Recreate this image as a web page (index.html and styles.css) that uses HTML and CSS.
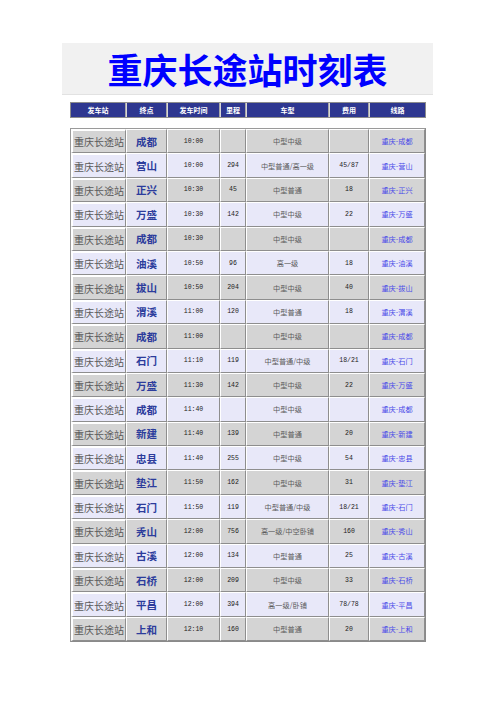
FILE: index.html
```html
<!DOCTYPE html>
<html lang="zh-CN">
<head>
<meta charset="utf-8">
<title>重庆长途站时刻表</title>
<link rel="stylesheet" href="styles.css">
</head>
<body>
<div class="page">
  <div class="title">重庆长途站时刻表</div>
  <table class="head">
    <colgroup><col class="c1"><col class="c2"><col class="c3"><col class="c4"><col class="c5"><col class="c6"><col class="c7"></colgroup>
    <tr><th>发车站</th><th>终点</th><th>发车时间</th><th>里程</th><th>车型</th><th>费用</th><th>线路</th></tr>
  </table>
  <table class="tt">
    <colgroup><col class="c1"><col class="c2"><col class="c3"><col class="c4"><col class="c5"><col class="c6"><col class="c7"></colgroup>
    <tr class="g"><td class="st">重庆长途站</td><td class="dst">成都</td><td class="num">10:00</td><td class="num"></td><td class="typ">中型中级</td><td class="num"></td><td class="rt">重庆-成都</td></tr>
    <tr class="l"><td class="st">重庆长途站</td><td class="dst">营山</td><td class="num">10:00</td><td class="num">294</td><td class="typ">中型普通/高一级</td><td class="num">45/87</td><td class="rt">重庆-营山</td></tr>
    <tr class="g"><td class="st">重庆长途站</td><td class="dst">正兴</td><td class="num">10:30</td><td class="num">45</td><td class="typ">中型普通</td><td class="num">18</td><td class="rt">重庆-正兴</td></tr>
    <tr class="l"><td class="st">重庆长途站</td><td class="dst">万盛</td><td class="num">10:30</td><td class="num">142</td><td class="typ">中型中级</td><td class="num">22</td><td class="rt">重庆-万盛</td></tr>
    <tr class="g"><td class="st">重庆长途站</td><td class="dst">成都</td><td class="num">10:30</td><td class="num"></td><td class="typ">中型中级</td><td class="num"></td><td class="rt">重庆-成都</td></tr>
    <tr class="l"><td class="st">重庆长途站</td><td class="dst">油溪</td><td class="num">10:50</td><td class="num">96</td><td class="typ">高一级</td><td class="num">18</td><td class="rt">重庆-油溪</td></tr>
    <tr class="g"><td class="st">重庆长途站</td><td class="dst">拔山</td><td class="num">10:50</td><td class="num">204</td><td class="typ">中型中级</td><td class="num">40</td><td class="rt">重庆-拔山</td></tr>
    <tr class="l"><td class="st">重庆长途站</td><td class="dst">渭溪</td><td class="num">11:00</td><td class="num">120</td><td class="typ">中型普通</td><td class="num">18</td><td class="rt">重庆-渭溪</td></tr>
    <tr class="g"><td class="st">重庆长途站</td><td class="dst">成都</td><td class="num">11:00</td><td class="num"></td><td class="typ">中型中级</td><td class="num"></td><td class="rt">重庆-成都</td></tr>
    <tr class="l"><td class="st">重庆长途站</td><td class="dst">石门</td><td class="num">11:10</td><td class="num">119</td><td class="typ">中型普通/中级</td><td class="num">18/21</td><td class="rt">重庆-石门</td></tr>
    <tr class="g"><td class="st">重庆长途站</td><td class="dst">万盛</td><td class="num">11:30</td><td class="num">142</td><td class="typ">中型中级</td><td class="num">22</td><td class="rt">重庆-万盛</td></tr>
    <tr class="l"><td class="st">重庆长途站</td><td class="dst">成都</td><td class="num">11:40</td><td class="num"></td><td class="typ">中型中级</td><td class="num"></td><td class="rt">重庆-成都</td></tr>
    <tr class="g"><td class="st">重庆长途站</td><td class="dst">新建</td><td class="num">11:40</td><td class="num">139</td><td class="typ">中型普通</td><td class="num">20</td><td class="rt">重庆-新建</td></tr>
    <tr class="l"><td class="st">重庆长途站</td><td class="dst">忠县</td><td class="num">11:40</td><td class="num">255</td><td class="typ">中型中级</td><td class="num">54</td><td class="rt">重庆-忠县</td></tr>
    <tr class="g"><td class="st">重庆长途站</td><td class="dst">垫江</td><td class="num">11:50</td><td class="num">162</td><td class="typ">中型中级</td><td class="num">31</td><td class="rt">重庆-垫江</td></tr>
    <tr class="l"><td class="st">重庆长途站</td><td class="dst">石门</td><td class="num">11:50</td><td class="num">119</td><td class="typ">中型普通/中级</td><td class="num">18/21</td><td class="rt">重庆-石门</td></tr>
    <tr class="g"><td class="st">重庆长途站</td><td class="dst">秀山</td><td class="num">12:00</td><td class="num">756</td><td class="typ">高一级/中空卧铺</td><td class="num">160</td><td class="rt">重庆-秀山</td></tr>
    <tr class="l"><td class="st">重庆长途站</td><td class="dst">古溪</td><td class="num">12:00</td><td class="num">134</td><td class="typ">中型普通</td><td class="num">25</td><td class="rt">重庆-古溪</td></tr>
    <tr class="g"><td class="st">重庆长途站</td><td class="dst">石桥</td><td class="num">12:00</td><td class="num">209</td><td class="typ">中型中级</td><td class="num">33</td><td class="rt">重庆-石桥</td></tr>
    <tr class="l"><td class="st">重庆长途站</td><td class="dst">平昌</td><td class="num">12:00</td><td class="num">394</td><td class="typ">高一级/卧铺</td><td class="num">78/78</td><td class="rt">重庆-平昌</td></tr>
    <tr class="g"><td class="st">重庆长途站</td><td class="dst">上和</td><td class="num">12:10</td><td class="num">160</td><td class="typ">中型普通</td><td class="num">20</td><td class="rt">重庆-上和</td></tr>
  </table>
</div>
</body>
</html>
```
FILE: styles.css
```css
html, body {
  margin: 0;
  padding: 0;
  background: #ffffff;
}
body {
  font-family: "Noto Sans CJK SC", "Noto Sans", sans-serif;
}
.page {
  padding: 43px 0 0 62px;
}
.title {
  width: 371px;
  height: 51px;
  background: #f1f1f1;
  border-bottom: 1px solid #e2e2e2;
  color: #0000ff;
  font-weight: bold;
  font-size: 35px;
  line-height: 51px;
  text-align: center;
}
table {
  border-collapse: separate;
  border-spacing: 0;
  table-layout: fixed;
  width: 354px;
  margin-left: 8px;
}
col.c1 { width: 55px; }
col.c2 { width: 41px; }
col.c3 { width: 53px; }
col.c4 { width: 26px; }
col.c5 { width: 83px; }
col.c6 { width: 40px; }
col.c7 { width: 56px; }

.head {
  margin-top: 7px;
  border: 1px solid #8c8c8c;
}
.head th {
  height: 14px;
  padding: 0;
  background: #2e3790;
  color: #ffffff;
  font-size: 7px;
  font-weight: bold;
  text-align: center;
  border-right: 1px solid #a8a8a8;
  border-left: 1px solid #d8d8d8;
  line-height: 14px;
}
.head th:first-child { border-left: 0; }
.head th:last-child { border-right: 0; }

.tt {
  margin-top: 10px;
  border-top: 1px solid #9a9a9a;
  border-left: 1px solid #9a9a9a;
  border-right: 1px solid #8a8a8a;
  border-bottom: 1px solid #8a8a8a;
}
.tt td {
  height: 24.4px;
  padding: 0;
  box-sizing: border-box;
  text-align: center;
  vertical-align: middle;
  border-top: 1px solid #ffffff;
  border-left: 1px solid #ffffff;
  border-right: 1px solid #8e8e8e;
  border-bottom: 1px solid #8e8e8e;
  overflow: hidden;
  white-space: nowrap;
}
.tt tr.g td { background: #d4d4d4; }
.tt tr.l td { background: #e8e8f9; }

.tt td.st {
  border-top: 2px solid #ffffff;
  border-left: 2px solid #ffffff;
  font-size: 10px;
  color: #5a5a5a;
  text-align: left;
  padding-left: 1px;
}
.tt td.dst {
  font-size: 10.5px;
  font-weight: bold;
  color: #2c3c9c;
}
.tt td.num {
  font-family: "Liberation Mono", "DejaVu Sans Mono", monospace;
  font-size: 6.5px;
  color: #222222;
}
.tt td.typ {
  font-size: 7.2px;
  color: #5c5c5c;
}
.tt td.rt {
  font-size: 7.2px;
  color: #4a4ae8;
}
```
